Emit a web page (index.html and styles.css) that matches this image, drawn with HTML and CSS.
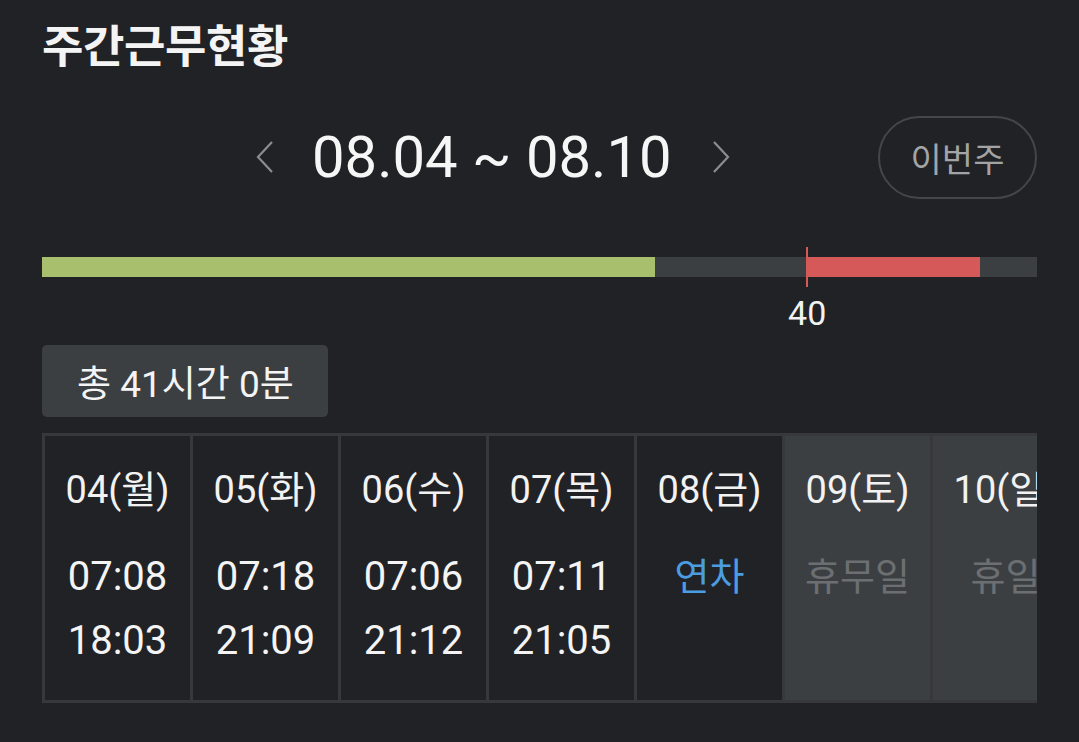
FILE: index.html
```html
<!DOCTYPE html>
<html lang="ko">
<head>
<meta charset="utf-8">
<title>주간근무현황</title>
<link rel="stylesheet" href="styles.css">
</head>
<body>
<main class="page">
  <h1 class="title">주간근무현황</h1>

  <div class="week-nav">
    <div class="range">
      <button class="chev" aria-label="이전 주">
        <svg width="20" height="34" viewBox="0 0 20 34"><polyline points="17,2 3,17 17,32" fill="none" stroke="#8c8d90" stroke-width="2.2"/></svg>
      </button>
      <span class="range-text">08.04 ~ 08.10</span>
      <button class="chev" aria-label="다음 주">
        <svg width="20" height="34" viewBox="0 0 20 34"><polyline points="3,2 17,17 3,32" fill="none" stroke="#8c8d90" stroke-width="2.2"/></svg>
      </button>
    </div>
    <button class="this-week">이번주</button>
  </div>

  <div class="gauge">
    <div class="fill fill-ok" style="left:0; width:61.6%"></div>
    <div class="fill fill-over" style="left:76.9%; width:17.4%"></div>
    <div class="marker" style="left:76.9%"></div>
    <div class="marker-label" style="left:76.9%">40</div>
  </div>

  <div class="total">총 41시간 0분</div>

  <div class="days">
    <div class="day">
      <div class="day-label">04(월)</div>
      <div class="time">07:08</div>
      <div class="time">18:03</div>
    </div>
    <div class="day">
      <div class="day-label">05(화)</div>
      <div class="time">07:18</div>
      <div class="time">21:09</div>
    </div>
    <div class="day">
      <div class="day-label">06(수)</div>
      <div class="time">07:06</div>
      <div class="time">21:12</div>
    </div>
    <div class="day">
      <div class="day-label">07(목)</div>
      <div class="time">07:11</div>
      <div class="time">21:05</div>
    </div>
    <div class="day">
      <div class="day-label">08(금)</div>
      <div class="time leave">연차</div>
    </div>
    <div class="day off">
      <div class="day-label">09(토)</div>
      <div class="time rest">휴무일</div>
    </div>
    <div class="day off">
      <div class="day-label">10(일)</div>
      <div class="time rest">휴일</div>
    </div>
  </div>
</main>
</body>
</html>
```

FILE: styles.css
```css
* { box-sizing: border-box; }

html, body {
  margin: 0;
  padding: 0;
  background: #212226;
}

body {
  font-family: Roboto, "Noto Sans CJK KR", "Noto Sans", sans-serif;
  color: #f2f2f2;
  width: 1079px;
  height: 742px;
  overflow: hidden;
}

.page {
  padding: 14px 0 0 42px;
  width: 1037px;
}

.title {
  margin: 0;
  height: 60px;
  line-height: 60px;
  font-family: "Noto Sans CJK KR", sans-serif;
  font-weight: 700;
  font-size: 45px;
  letter-spacing: -0.4px;
  color: #f4f4f4;
}

.week-nav {
  margin-top: 42px;
  height: 82px;
  display: flex;
  align-items: center;
}

.range {
  margin-left: 213px;
  display: flex;
  align-items: center;
}

.chev {
  background: none;
  border: 0;
  padding: 0;
  width: 20px;
  height: 34px;
  display: flex;
}

.range-text {
  margin: 0 39px 0 37px;
  font-size: 58px;
  line-height: 82px;
  color: #f6f6f6;
}

.this-week {
  margin-left: auto;
  width: 159px;
  height: 83px;
  border: 2px solid #44464a;
  border-radius: 42px;
  background: transparent;
  color: #a3a4a6;
  font-family: "Noto Sans CJK KR", sans-serif;
  font-size: 34px;
  padding: 0;
}

.gauge {
  position: relative;
  margin-top: 59px;
  height: 20px;
  background: #3c3f42;
  margin-bottom: 68px;
}

.fill {
  position: absolute;
  top: 0;
  bottom: 0;
}

.fill-ok { background: #a8c06d; }
.fill-over { background: #d65959; }

.marker {
  position: absolute;
  top: -10px;
  height: 40px;
  width: 2px;
  margin-left: -1px;
  background: #d65959;
}

.marker-label {
  position: absolute;
  top: 36px;
  transform: translateX(-50%);
  font-size: 34px;
  line-height: 40px;
  color: #f2f2f2;
}

.total {
  display: inline-flex;
  align-items: center;
  height: 72px;
  padding: 0 34px 0 35px;
  background: #3c3f42;
  border-radius: 5px;
  font-size: 37px;
  color: #f4f4f4;
}

.days {
  margin-top: 16px;
  display: flex;
  height: 270px;
  width: 995px;
  overflow: hidden;
  border-top: 3px solid #37383b;
  border-bottom: 3px solid #37383b;
  border-left: 3px solid #37383b;
}

.day {
  flex: 0 0 148px;
  border-right: 3px solid #37383b;
  padding-top: 32px;
  text-align: center;
  white-space: nowrap;
}

.day.off { background: #3c3f42; }

.day-label {
  font-size: 38px;
  line-height: 44px;
  margin-bottom: 33px;
  color: #f2f2f2;
}

.time {
  font-size: 40px;
  line-height: 64px;
  color: #f4f4f4;
}

.time.leave,
.time.rest { font-size: 38px; }

.time.leave { color: #4a9de0; }
.time.rest { color: #6c6f72; }
```
